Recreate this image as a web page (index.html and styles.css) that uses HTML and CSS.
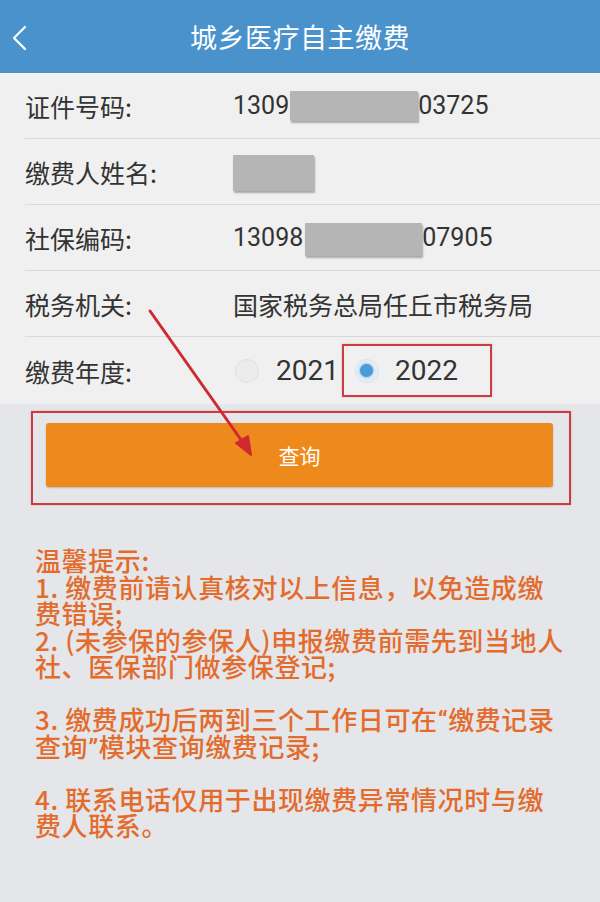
FILE: index.html
```html
<!DOCTYPE html>
<html lang="zh-CN">
<head>
<meta charset="utf-8">
<title>城乡医疗自主缴费</title>
<link rel="stylesheet" href="styles.css">
</head>
<body>
<div class="page">
  <header class="topbar">
    <span class="back">
      <svg width="18" height="26" viewBox="0 0 18 26"><path d="M15 2 L4 13 L15 24" fill="none" stroke="#fff" stroke-width="2.2" stroke-linecap="round" stroke-linejoin="round"/></svg>
    </span>
    <h1 class="title">城乡医疗自主缴费</h1>
    <span class="spacer"></span>
  </header>

  <section class="form">
    <div class="row">
      <span class="label">证件号码:</span>
      <span class="value num">1309<span class="mask mask-id"></span>03725</span>
    </div>
    <div class="row">
      <span class="label">缴费人姓名:</span>
      <span class="value"><span class="mask mask-name"></span></span>
    </div>
    <div class="row">
      <span class="label">社保编码:</span>
      <span class="value num">13098<span class="mask mask-ss"></span>07905</span>
    </div>
    <div class="row">
      <span class="label">税务机关:</span>
      <span class="value">国家税务总局任丘市税务局</span>
    </div>
    <div class="row last">
      <span class="label">缴费年度:</span>
      <span class="value radios">
        <span class="opt"><span class="radio"></span><span class="year">2021</span></span>
        <span class="opt boxed"><span class="radio on"></span><span class="year">2022</span></span>
      </span>
    </div>
  </section>

  <div class="btn-frame">
    <button class="btn">查询</button>
  </div>

  <div class="tips">
    <p>温馨提示:</p>
    <p>1. 缴费前请认真核对以上信息，以免造成缴</p>
    <p>费错误;</p>
    <p>2. (未参保的参保人)申报缴费前需先到当地人</p>
    <p>社、医保部门做参保登记;</p>
    <p class="blank">&nbsp;</p>
    <p>3. 缴费成功后两到三个工作日可在<span class="q">“</span>缴费记录</p>
    <p>查询<span class="q">”</span>模块查询缴费记录;</p>
    <p class="blank">&nbsp;</p>
    <p>4. 联系电话仅用于出现缴费异常情况时与缴</p>
    <p>费人联系。</p>
  </div>

  <svg class="arrow" width="600" height="902" viewBox="0 0 600 902">
    <line x1="150" y1="311" x2="244" y2="444" stroke="#cf2a30" stroke-width="3" stroke-linecap="round"/>
    <path d="M251 455 L236 443 L248 436 Z" fill="#cf2a30" stroke="#cf2a30" stroke-width="2" stroke-linejoin="round"/>
  </svg>
</div>
</body>
</html>
```

FILE: styles.css
```css
* { box-sizing: border-box; }
html, body { margin: 0; padding: 0; }
body {
  width: 600px;
  height: 902px;
  overflow: hidden;
  background: #e5e6ea;
  font-family: "Noto Sans CJK SC", "Noto Sans", sans-serif;
  color: #333;
}
.page { position: relative; width: 600px; height: 902px; }

.topbar {
  height: 73px;
  background: #4a92cc;
  display: grid;
  grid-template-columns: 60px 1fr 60px;
  align-items: center;
  box-shadow: 0 1px 2px rgba(0,0,0,.15);
}
.back { display: flex; padding-left: 10px; padding-top: 2px; }
.title {
  margin: 0;
  text-align: center;
  color: #fff;
  font-weight: 400;
  font-size: 27px;
  letter-spacing: 0.5px;
  line-height: 1;
}

.form {
  background: #f0f0f0;
  padding-left: 25px;
}
.row {
  height: 66px;
  display: grid;
  grid-template-columns: 208px 1fr;
  align-items: center;
  border-bottom: 1px solid #d9d9d9;
}
.row.last { border-bottom: none; height: 67px; }
.label { font-size: 25px; color: #333; }
.value { font-size: 25px; color: #333; display: flex; align-items: center; }
.num { font-family: Roboto, "Noto Sans", sans-serif; font-size: 25px; }
.year { font-family: Roboto, "Noto Sans", sans-serif; font-size: 28px; color: #333; }

.mask {
  display: inline-block;
  background: #b5b5b5;
  box-shadow: 1px 2px 2px rgba(0,0,0,.3);
  border-radius: 1px;
}
.mask-id { width: 128px; height: 30px; margin-left: 1px; }
.mask-name { width: 81px; height: 36px; margin-top: 2px; }
.mask-ss { width: 117px; height: 33px; margin-left: 2px; margin-top: 3px; }

.radios { gap: 0; }
.opt { display: flex; align-items: center; }
.radio {
  width: 24px; height: 24px; border-radius: 50%;
  background: #ececec;
  border: 1px solid #e0e0e0;
  margin-right: 17px;
  margin-left: 2px;
  display: flex; align-items: center; justify-content: center;
}
.radio.on { background: #e6eef5; border-color: #d7e3ee; }
.radio.on::after {
  content: "";
  width: 13px; height: 13px; border-radius: 50%;
  background: #4b9bd9;
  box-shadow: 0 0 3px #4b9bd9;
}
.boxed {
  margin-left: 3px;
  border: 2px solid #d13a40;
  height: 53px;
  width: 150px;
  padding-left: 9px;
  box-shadow: 0 0 2px rgba(0,0,0,.2);
}
.boxed .radio { margin-right: 16px; }

.btn-frame {
  margin: 7px 0 0 31px;
  width: 540px;
  height: 94px;
  border: 2px solid #d13a40;
  padding: 10px 16px 16px 13px;
  box-shadow: 0 0 2px rgba(0,0,0,.2);
}
.btn {
  display: block;
  width: 100%;
  height: 100%;
  border: none;
  border-radius: 3px;
  background: #ee891c;
  color: #fff;
  font-family: "Noto Sans CJK SC", sans-serif;
  font-size: 21px;
  box-shadow: 0 1px 2px rgba(0,0,0,.2);
  padding: 0;
}

.tips {
  margin-top: 42px;
  padding-left: 35px;
  color: #e36c2d;
  font-size: 26px;
  font-weight: 500;
  letter-spacing: 0.6px;
}
.tips p {
  margin: 0;
  height: 26.5px;
  line-height: 26.5px;
  white-space: nowrap;
}
.tips .q { font-family: Roboto, "Noto Sans", sans-serif; }

.arrow {
  position: absolute;
  left: 0; top: 0;
  pointer-events: none;
}
```
